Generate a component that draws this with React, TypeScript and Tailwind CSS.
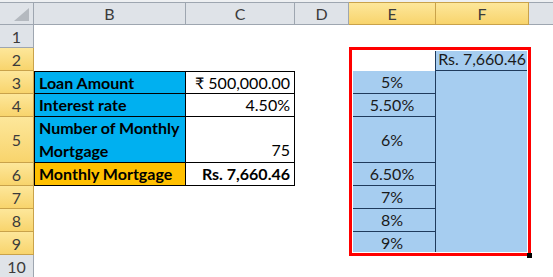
import React from 'react';

const hdr = 'flex items-center justify-center bg-[#dfe3e8] border-r border-b border-[#9ea6b0] text-[#3b3b3b]';
const hdrSel = 'flex items-center justify-center bg-gradient-to-b from-[#fde79a] to-[#f8d46c] border-r border-b border-[#c9a24a] text-[#3b3b3b]';
const tbl = 'flex items-center px-1 border-r border-b border-black';
const eCell = 'flex items-center justify-center bg-[#a6cdf0] border-r border-b border-[#1f3a5c] text-[#1a1a1a]';

function RowHead({ n, sel }: { n: number; sel?: boolean }) {
  return <div className={`${sel ? hdrSel : hdr} pt-[1px]`}>{n}</div>;
}

export default function App() {
  return (
    <div
      className="w-[553px] h-[277px] overflow-hidden bg-white text-[16px] leading-none"
      style={{ fontFamily: 'Lato, "Noto Sans", "DejaVu Sans", sans-serif' }}
    >
      <div className="h-[2px] bg-[#eef0f2]" />
      <div className="relative grid grid-cols-[34px_152px_109px_54px_87px_93px_1fr] grid-rows-[23px_23px_23px_23px_23px_46px_23px_23px_23px_23px_23px]">
        {/* column headers */}
        <div className={`${hdr} border-t relative`}>
          <svg className="absolute right-[4px] bottom-[3px]" width="15" height="13" viewBox="0 0 15 13">
            <polygon points="15,0 15,13 0,13" fill="#b4b9bf" />
          </svg>
        </div>
        <div className={`${hdr} border-t`}>B</div>
        <div className={`${hdr} border-t`}>C</div>
        <div className={`${hdr} border-t`}>D</div>
        <div className={`${hdrSel} border-t`}>E</div>
        <div className={`${hdrSel} border-t`}>F</div>
        <div className={`${hdr} border-t border-r-0`} />

        {/* row 1 */}
        <RowHead n={1} />
        <div className="col-span-6" />

        {/* row 2 */}
        <RowHead n={2} sel />
        <div className="col-span-3" />
        <div className="bg-white" />
        <div className="flex items-center justify-end pr-[3px] bg-[#a6cdf0] border-l border-b border-[#1f3a5c] text-[#1a1a1a] -ml-px">
          Rs. 7,660.46
        </div>
        <div />

        {/* row 3 */}
        <RowHead n={3} sel />
        <div className={`${tbl} border-l border-t bg-[#00b0f0] font-bold text-black`}>Loan Amount</div>
        <div className={`${tbl} border-t justify-end text-black`}>₹ 500,000.00</div>
        <div />
        <div className={eCell}>5%</div>
        <div className="row-span-7 bg-[#a6cdf0]" />
        <div />

        {/* row 4 */}
        <RowHead n={4} sel />
        <div className={`${tbl} border-l bg-[#00b0f0] font-bold text-black`}>Interest rate</div>
        <div className={`${tbl} justify-end text-black`}>4.50%</div>
        <div />
        <div className={eCell}>5.50%</div>
        <div />

        {/* row 5 */}
        <RowHead n={5} sel />
        <div className={`${tbl} border-l bg-[#00b0f0] font-bold text-black leading-[23px] items-end`}>
          Number of Monthly
          <br />
          Mortgage
        </div>
        <div className={`${tbl} justify-end items-end pb-[4px] text-black`}>75</div>
        <div />
        <div className={eCell}>6%</div>
        <div />

        {/* row 6 */}
        <RowHead n={6} sel />
        <div className={`${tbl} border-l bg-[#ffc000] font-bold text-black`}>Monthly Mortgage</div>
        <div className={`${tbl} justify-end font-bold text-black`}>Rs. 7,660.46</div>
        <div />
        <div className={eCell}>6.50%</div>
        <div />

        {/* rows 7-9 */}
        <RowHead n={7} sel />
        <div className="col-span-3" />
        <div className={eCell}>7%</div>
        <div />

        <RowHead n={8} sel />
        <div className="col-span-3" />
        <div className={eCell}>8%</div>
        <div />

        <RowHead n={9} sel />
        <div className="col-span-3" />
        <div className={eCell}>9%</div>
        <div />

        {/* row 10 */}
        <RowHead n={10} />
        <div className="col-span-6" />

        {/* selection overlay */}
        <div className="absolute left-[349px] top-[45px] w-[182px] h-[209px] border-[3px] border-[#ff0000] shadow-[inset_0_0_0_1px_white] pointer-events-none" />
        <div className="absolute left-[527px] top-[251px] w-[5px] h-[5px] bg-black" />
      </div>
    </div>
  );
}
